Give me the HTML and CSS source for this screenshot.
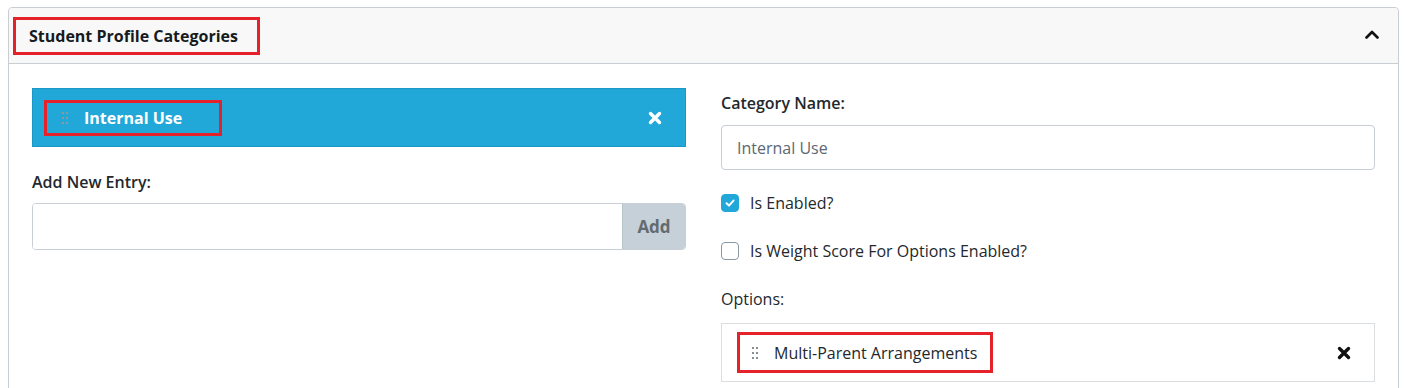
FILE: index.html
```html
<!DOCTYPE html>
<html>
<head>
<meta charset="utf-8">
<link rel="stylesheet" href="styles.css">
</head>
<body>
<div class="card">
  <div class="card-header">
    <div class="title hl">Student Profile Categories</div>
    <svg class="chev" width="14" height="9" viewBox="0 0 14 9"><polyline points="1.5,7.5 7,2 12.5,7.5" fill="none" stroke="#111" stroke-width="2.6" stroke-linecap="round" stroke-linejoin="round"/></svg>
  </div>
  <div class="card-body">
    <div class="col">
      <div class="cat-bar">
        <div class="cat-name hl">
          <span class="drag drag-light"><i></i><i></i><i></i><i></i><i></i><i></i></span>
          <span>Internal Use</span>
        </div>
        <svg class="x" width="14" height="14" viewBox="0 0 14 14"><path d="M2.5 2.5 L11.5 11.5 M11.5 2.5 L2.5 11.5" stroke="#fff" stroke-width="3.4" stroke-linecap="round"/></svg>
      </div>
      <div class="label lbl-entry">Add New Entry:</div>
      <div class="input-group">
        <div class="ig-input"></div>
        <div class="ig-btn">Add</div>
      </div>
    </div>
    <div class="col">
      <div class="label lbl-cat">Category Name:</div>
      <div class="input">Internal Use</div>
      <div class="check-row row1">
        <span class="cb checked"><svg width="12" height="12" viewBox="0 0 12 12"><polyline points="2.5,6.3 5,8.6 9.5,3.6" fill="none" stroke="#fff" stroke-width="2" stroke-linecap="round" stroke-linejoin="round"/></svg></span>
        <span class="cb-text">Is Enabled?</span>
      </div>
      <div class="check-row row2">
        <span class="cb"></span>
        <span class="cb-text">Is Weight Score For Options Enabled?</span>
      </div>
      <div class="opt-label">Options:</div>
      <div class="opt-item">
        <div class="opt-name hl">
          <span class="drag drag-dark"><i></i><i></i><i></i><i></i><i></i><i></i></span>
          <span>Multi-Parent Arrangements</span>
        </div>
        <svg class="x" width="14" height="14" viewBox="0 0 14 14"><path d="M2.5 2.5 L11.5 11.5 M11.5 2.5 L2.5 11.5" stroke="#111" stroke-width="3.4" stroke-linecap="round"/></svg>
      </div>
    </div>
  </div>
</div>
</body>
</html>
```

FILE: styles.css
```css
* { box-sizing: border-box; }
html, body { margin: 0; padding: 0; background: #fff; }
body {
  font-family: "Open Sans", "Noto Sans", "Liberation Sans", sans-serif;
  font-size: 16px;
  color: #23282c;
}
.card {
  margin: 7px 6px 0 8px;
  border: 1px solid #c8ced3;
  border-radius: 4px;
  height: 400px;
}
.card-header {
  height: 56px;
  background: #f8f8f8;
  border-bottom: 1px solid #c8ced3;
  border-radius: 4px 4px 0 0;
  display: flex;
  align-items: center;
  justify-content: space-between;
  padding: 0 19px 0 4px;
}
.hl { border: 3px solid #e52229; }
.title {
  font-weight: 700;
  font-size: 16px;
  color: #151b1e;
  height: 38px;
  width: 247px;
  display: flex;
  align-items: center;
  padding-left: 13px;
  margin-top: 1px;
  white-space: nowrap;
}
.chev { margin-top: -2px; }
.card-body {
  padding: 24px 23px 0 23px;
  display: grid;
  grid-template-columns: 1fr 1fr;
  column-gap: 35px;
}
.col { display: flex; flex-direction: column; align-items: stretch; }
.cat-bar {
  height: 59px;
  background: #22a8d8;
  border: 1px solid #1b98c6;
  display: flex;
  align-items: center;
  justify-content: space-between;
  padding: 0 23px 0 11px;
}
.cat-name {
  width: 178px;
  height: 36px;
  display: flex;
  align-items: center;
  padding-left: 15px;
  color: #fff;
  font-weight: 700;
  font-size: 16px;
  margin-top: 1px;
  white-space: nowrap;
}
.drag {
  display: grid;
  grid-template-columns: 2px 2px;
  grid-auto-rows: 2px;
  column-gap: 2px;
  row-gap: 3px;
  margin-right: 16px;
}
.drag i { display: block; width: 2px; height: 2px; }
.drag-light i { background: #8a9aa0; }
.drag-dark i { background: #8a8f93; }
.label { font-weight: 600; line-height: 24px; color: #23282c; }
.lbl-entry { margin-top: 23px; }
.lbl-cat { margin-top: 3px; }
.input-group {
  margin-top: 9px;
  height: 47px;
  display: flex;
  border: 1px solid #c8ced3;
  border-radius: 4px;
  overflow: hidden;
}
.ig-input { flex: 1; background: #fff; }
.ig-btn {
  width: 63px;
  background: #c5d0d8;
  border-left: 1px solid #b8c4cc;
  color: #646b70;
  font-weight: 700;
  font-size: 17px;
  display: flex;
  align-items: center;
  justify-content: center;
}
.input {
  margin-top: 10px;
  height: 45px;
  border: 1px solid #c8ced3;
  border-radius: 4px;
  padding: 0 15px;
  display: flex;
  align-items: center;
  color: #5c6873;
}
.check-row { display: flex; align-items: center; height: 24px; }
.row1 { margin-top: 21px; }
.row2 { margin-top: 24px; }
.cb {
  width: 18px;
  height: 18px;
  border: 1px solid #8a98a3;
  border-radius: 4px;
  background: #fff;
  margin-right: 11px;
  display: flex;
  align-items: center;
  justify-content: center;
}
.cb.checked { background: #22a8d8; border-color: #22a8d8; }
.cb-text { color: #23282c; }
.opt-label { margin-top: 24px; line-height: 24px; }
.opt-item {
  margin-top: 12px;
  height: 59px;
  border: 1px solid #dcdfe2;
  display: flex;
  align-items: center;
  justify-content: space-between;
  padding: 0 23px 0 15px;
}
.opt-name {
  width: 256px;
  height: 41px;
  display: flex;
  align-items: center;
  padding-left: 12px;
  white-space: nowrap;
}
```
